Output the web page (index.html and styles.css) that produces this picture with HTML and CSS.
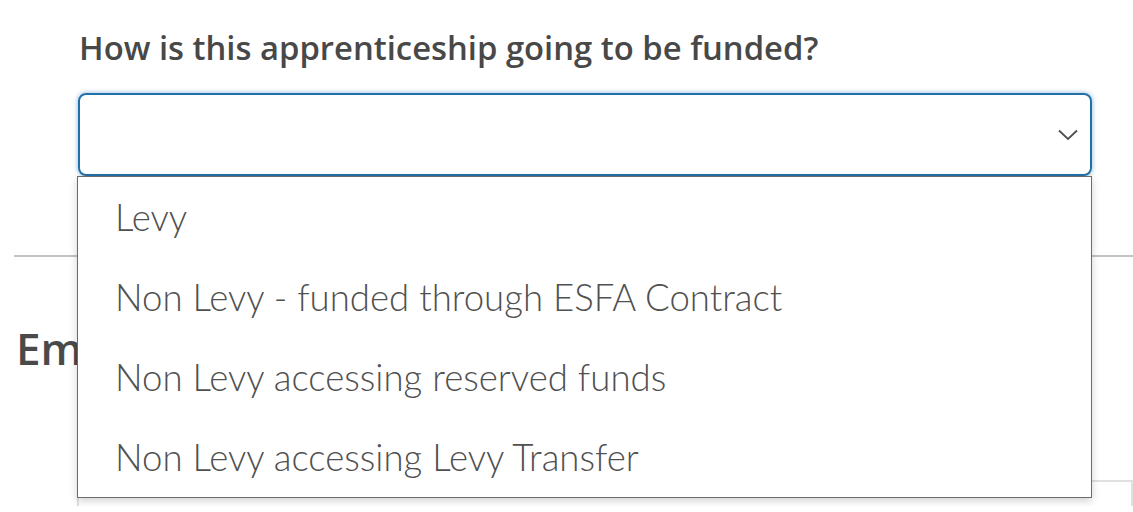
FILE: index.html
```html
<!DOCTYPE html>
<html>
<head>
	<title>Funding</title>
	<meta charset="utf-8">
	<link rel="stylesheet" href="styles.css">
</head>
<body>
  <div class="question">
  	<h2 class="label">How is this apprenticeship going to be funded?</h2>
  	<div class="select">
  		<svg class="chevron" width="20" height="12" viewBox="0 0 20 12">
  			<path d="M1 1.5 L10 10 L19 1.5" fill="none" stroke="#4f4f4f" stroke-width="1.8"/>
  		</svg>
  		<ul class="options">
  			<li>Levy</li>
  			<li>Non Levy - funded through ESFA Contract</li>
  			<li>Non Levy accessing reserved funds</li>
  			<li>Non Levy accessing Levy Transfer</li>
  		</ul>
  	</div>
  </div>
  <div class="section">
  	<h2 class="section-title">Employer details</h2>
  	<div class="card"></div>
  </div>
</body>
</html>
```

FILE: styles.css
```css
body {
	margin: 0;
	background: #fff;
	color: #4a4a4a;
	font-family: "Open Sans", sans-serif;
	overflow: hidden;
}
.question {
	padding: 26px 41px 0 78px;
}
.label {
	margin: 0 0 23px 1px;
	font-size: 32.8px;
	font-weight: 600;
	line-height: 44px;
	color: #484848;
}
.select {
	position: relative;
	height: 79px;
	border: 2px solid #2270a8;
	border-radius: 8px;
	box-shadow: 0 0 4px 1px rgba(70, 140, 200, 0.45);
}
.chevron {
	position: absolute;
	right: 12px;
	top: 34px;
}
.options {
	position: absolute;
	top: 81px;
	left: -3px;
	right: -2px;
	margin: 0;
	padding: 0;
	list-style: none;
	background: #fff;
	border: 1px solid #6b6b6b;
	box-shadow: 0 3px 8px rgba(0, 0, 0, 0.18);
	z-index: 2;
}
.options li {
	height: 80px;
	line-height: 80px;
	padding-left: 37px;
	font-family: "Lato", sans-serif;
	font-weight: 300;
	font-size: 36.6px;
	color: #505050;
}
.section {
	margin: 79px 0 0 14px;
	border-top: 2px solid #c4c4c4;
}
.section-title {
	margin: 63px 0 0 2px;
	font-size: 44px;
	font-weight: 600;
	line-height: 56px;
	color: #4a4a4a;
}
.card {
	margin: 104px 0 0 63px;
	height: 24px;
	border: 2px solid #e0e0e0;
	border-bottom: none;
}
```
